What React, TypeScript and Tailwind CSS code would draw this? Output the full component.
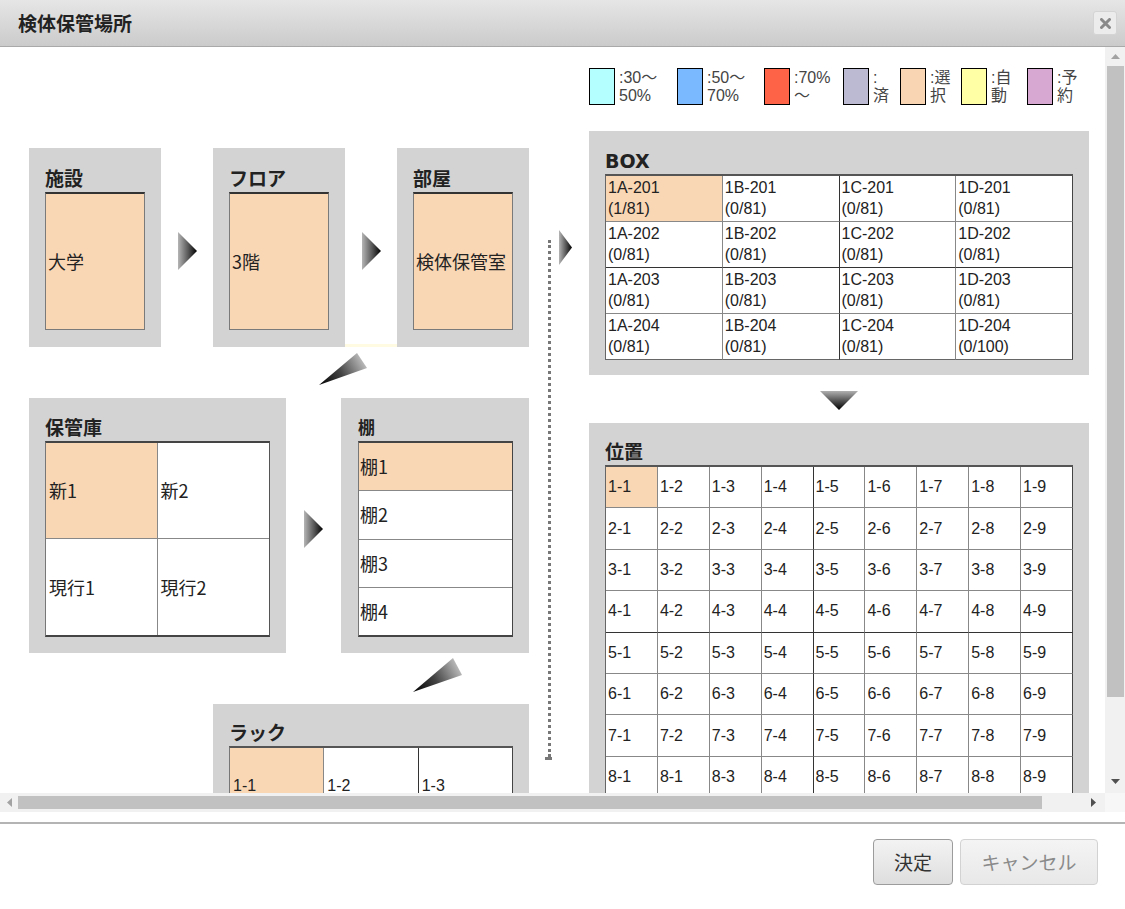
import React from "react";

const SANS = "font-['Liberation_Sans','Noto_Sans_CJK_JP',sans-serif]";
const HEAD = "font-['DejaVu_Sans','Noto_Sans_CJK_JP',sans-serif]";
const JP = "font-['Noto_Sans_CJK_JP',sans-serif]";
const SEL = "bg-[#f9d7b5]";

function RightTri({ id, w = 19, h = 38 }: { id: string; w?: number; h?: number }) {
  return (
    <svg width={w} height={h} viewBox={`0 0 ${w} ${h}`} className="block">
      <defs>
        <linearGradient id={id} x1="0" y1="0" x2="1" y2="0">
          <stop offset="0" stopColor="#b5b5b5" />
          <stop offset="0.55" stopColor="#555" />
          <stop offset="1" stopColor="#000" />
        </linearGradient>
      </defs>
      <polygon points={`0,0 ${w},${h / 2} 0,${h}`} fill={`url(#${id})`} />
    </svg>
  );
}

function DownTri() {
  return (
    <svg width={38} height={19} viewBox="0 0 38 19" className="block">
      <defs>
        <linearGradient id="dg" x1="0" y1="0" x2="0" y2="1">
          <stop offset="0" stopColor="#b0b0b0" />
          <stop offset="0.5" stopColor="#555" />
          <stop offset="1" stopColor="#000" />
        </linearGradient>
      </defs>
      <polygon points="0,0 38,0 19,19" fill="url(#dg)" />
    </svg>
  );
}

function Wedge({ id, pts, tip, base }: { id: string; pts: string; tip: [number, number]; base: [number, number] }) {
  return (
    <svg width={52} height={38} viewBox="0 0 52 38" className="block">
      <defs>
        <linearGradient id={id} gradientUnits="userSpaceOnUse" x1={tip[0]} y1={tip[1]} x2={base[0]} y2={base[1]}>
          <stop offset="0" stopColor="#000" />
          <stop offset="0.5" stopColor="#444" />
          <stop offset="1" stopColor="#b8b8b8" />
        </linearGradient>
      </defs>
      <polygon points={pts} fill={`url(#${id})`} />
    </svg>
  );
}

function Panel({
  title,
  className,
  titleCls,
  children,
}: {
  title: string;
  className: string;
  titleCls?: string;
  children: React.ReactNode;
}) {
  return (
    <div className={`bg-[#d3d3d3] shrink-0 ${className}`}>
      <div className={`h-[26px] leading-[26px] font-bold text-[#222] ${HEAD} ${titleCls ?? "text-[19px]"}`}>{title}</div>
      {children}
    </div>
  );
}

function BigBox({ text }: { text: string }) {
  return (
    <div className={`h-[138px] ${SEL} border border-[#7a7a7a] border-t-2 border-t-[#333] flex items-center pl-[2px] text-[18px] text-[#222] ${JP}`}>
      {text}
    </div>
  );
}

const legend = [
  { c: "bg-[#b4ffff]", t: [":30～", "50%"], w: "w-[88px]" },
  { c: "bg-[#7ab8ff]", t: [":50～", "70%"], w: "w-[87px]" },
  { c: "bg-[#ff6347]", t: [":70%", "～"], w: "w-[79px]" },
  { c: "bg-[#bcbad2]", t: [":", "済"], w: "w-[57px]" },
  { c: "bg-[#f9d5b3]", t: [":選", "択"], w: "w-[61px]" },
  { c: "bg-[#ffffa6]", t: [":自", "動"], w: "w-[66px]" },
  { c: "bg-[#d7a8d2]", t: [":予", "約"], w: "w-[60px]" },
];

const boxRows = [1, 2, 3, 4].map((r) =>
  ["A", "B", "C", "D"].map((c) => ({
    label: `1${c}-20${r}`,
    count: c === "A" && r === 1 ? "(1/81)" : c === "D" && r === 4 ? "(0/100)" : "(0/81)",
  }))
);

const posRows = [1, 2, 3, 4, 5, 6, 7, 8].map((r) =>
  [1, 2, 3, 4, 5, 6, 7, 8, 9].map((c) => (r === 8 && c === 2 ? "8-1" : `${r}-${c}`))
);

export default function App() {
  return (
    <div className={`w-[1125px] h-[909px] bg-white flex flex-col overflow-hidden ${SANS}`}>
      {/* Header */}
      <div className="h-[47px] shrink-0 bg-gradient-to-b from-[#e6e6e6] to-[#cbcbcb] border-b border-[#a9a9a9] flex items-center justify-between pl-[18px] pr-[8px]">
        <div className={`text-[19px] font-bold text-[#222] ${JP}`}>検体保管場所</div>
        <div className="w-[24px] h-[24px] rounded-[3px] bg-[#ececec] border border-[#d4d4d4] flex items-center justify-center">
          <svg width="11" height="11" viewBox="0 0 11 11">
            <path d="M1.5 1.5 L9.5 9.5 M9.5 1.5 L1.5 9.5" stroke="#8a8a8a" strokeWidth="3" strokeLinecap="round" />
          </svg>
        </div>
      </div>

      {/* Scroll area */}
      <div className="flex flex-col shrink-0">
        <div className="flex h-[746px]">
          <div className="w-[1105px] h-[746px] overflow-hidden">
            <div className="flex w-max pl-[29px] pt-[21px]">
              {/* Left column */}
              <div className="w-[500px] mt-[80px] flex flex-col shrink-0">
                <div className="flex h-[199px]">
                  <Panel title="施設" className="w-[132px] h-[199px] pt-[18px] px-[16px]">
                    <BigBox text="大学" />
                  </Panel>
                  <div className="w-[52px] flex justify-center pt-[84px]">
                    <RightTri id="r1" />
                  </div>
                  <Panel title="フロア" className="w-[132px] h-[199px] pt-[18px] px-[16px]">
                    <BigBox text="3階" />
                  </Panel>
                  <div className="w-[52px] flex flex-col">
                    <div className="flex justify-center pt-[84px]">
                      <RightTri id="r2" />
                    </div>
                    <div className="mt-auto h-[3px] bg-[#fffbe3]" />
                  </div>
                  <Panel title="部屋" className="w-[132px] h-[199px] pt-[18px] px-[16px]">
                    <BigBox text="検体保管室" />
                  </Panel>
                </div>

                <div className="h-[51px] pl-[289px] pt-[4px]">
                  <Wedge id="w1" pts="1,34 39,2 49,17" tip={[1, 34]} base={[44, 9]} />
                </div>

                <div className="flex h-[255px]">
                  <Panel title="保管庫" className="w-[257px] h-[255px] pt-[17px] px-[16px]">
                    <div className={`h-[196px] grid grid-cols-2 grid-rows-2 border-t-2 border-b-2 border-[#444] border-l border-l-[#777] border-r border-r-[#555] text-[18px] text-[#222] ${JP}`}>
                      <div className={`${SEL} border-r border-b border-[#888] flex items-center pl-[3px]`}>新1</div>
                      <div className="bg-white border-b border-[#888] flex items-center pl-[3px]">新2</div>
                      <div className="bg-white border-r border-[#888] flex items-center pl-[3px]">現行1</div>
                      <div className="bg-white flex items-center pl-[3px]">現行2</div>
                    </div>
                  </Panel>
                  <div className="w-[55px] flex justify-center pt-[112px]">
                    <RightTri id="r3" />
                  </div>
                  <Panel title="棚" titleCls="text-[17px]" className="w-[188px] h-[255px] pt-[17px] pl-[17px] pr-[16px]">
                    <div className={`h-[196px] flex flex-col border-t-2 border-b-2 border-[#444] border-l border-l-[#777] border-r border-r-[#444] text-[18px] text-[#222] ${JP}`}>
                      {["棚1", "棚2", "棚3", "棚4"].map((s, i) => (
                        <div
                          key={s}
                          className={`flex-1 flex items-center pl-[1px] ${i === 0 ? SEL : "bg-white"} ${i < 3 ? "border-b border-[#888]" : ""}`}
                        >
                          {s}
                        </div>
                      ))}
                    </div>
                  </Panel>
                </div>

                <div className="h-[51px] pl-[383px] pt-[4px]">
                  <Wedge id="w2" pts="1,35 41,1 50,18" tip={[1, 35]} base={[46, 10]} />
                </div>

                <div className="pl-[184px]">
                  <Panel title="ラック" className="w-[316px] h-[120px] pt-[16px] px-[16px]">
                    <div className="grid grid-cols-3 border-t-2 border-[#555] border-l border-l-[#777] text-[16px] text-[#222]">
                      {["1-1", "1-2", "1-3"].map((t, ci) => (
                        <div
                          key={t}
                          className={`h-[74px] flex items-center pt-[2px] pl-[3px] border-b border-b-[#888] border-r ${
                            ci === 1 ? "border-r-[#333]" : ci === 2 ? "border-r-[#444]" : "border-r-[#888]"
                          } ${ci === 0 ? SEL : "bg-white"}`}
                        >
                          {t}
                        </div>
                      ))}
                    </div>
                  </Panel>
                </div>
              </div>

              {/* Connector column */}
              <div className="w-[60px] shrink-0 pl-[16px] pt-[162px] flex items-start">
                <div className="flex flex-col pt-[10px]">
                  <div className="ml-[3px] w-[3px] h-[517px] border-l-[3px] border-dotted border-[#777]" />
                  <div className="w-[6px] h-[3px] border-t-[3px] border-dotted border-[#777]" />
                </div>
                <div className="ml-[8px]">
                  <RightTri id="r4" w={13} h={35} />
                </div>
              </div>

              {/* Right column */}
              <div className="w-[500px] shrink-0 flex flex-col mr-[16px]">
                <div className="flex h-[37px]">
                  {legend.map((l, i) => (
                    <div key={i} className={`flex shrink-0 ${l.w}`}>
                      <div className={`w-[26px] h-[37px] border border-black ${l.c}`} />
                      <div className="ml-[4px] mt-[1px] text-[16px] leading-[18px] text-[#444] whitespace-nowrap">
                        <div>{l.t[0]}</div>
                        <div>{l.t[1]}</div>
                      </div>
                    </div>
                  ))}
                </div>

                <Panel title="BOX" className="mt-[26px] w-[500px] h-[244px] pt-[17px] px-[16px]">
                  <div className="grid grid-cols-4 border-t-2 border-t-[#555] border-l border-l-[#666] text-[16px] leading-[21px] text-[#222]">
                    {boxRows.map((row, ri) =>
                      row.map((cell, ci) => (
                        <div
                          key={cell.label}
                          className={`h-[46px] pl-[2px] pt-[1px] border-r border-b ${
                            ci === 1 ? "border-r-[#333]" : ci === 3 ? "border-r-[#444]" : "border-r-[#888]"
                          } ${ri === 1 ? "border-b-[#333]" : ri === 3 ? "border-b-[#666]" : "border-b-[#888]"} ${
                            ri === 0 && ci === 0 ? SEL : "bg-white"
                          }`}
                        >
                          <div>{cell.label}</div>
                          <div>{cell.count}</div>
                        </div>
                      ))
                    )}
                  </div>
                </Panel>

                <div className="h-[48px] flex justify-center pt-[16px]">
                  <DownTri />
                </div>

                <Panel title="位置" className="w-[500px] pt-[16px] px-[16px] pb-[16px]">
                  <div className="grid grid-cols-9 border-t-2 border-t-[#555] border-l border-l-[#666] text-[16px] text-[#222]">
                    {posRows.map((row, ri) =>
                      row.map((t, ci) => (
                        <div
                          key={`${ri}-${ci}`}
                          className={`h-[41.4px] flex items-center pl-[2px] border-r border-b ${
                            ci === 3 ? "border-r-[#333]" : ci === 8 ? "border-r-[#444]" : "border-r-[#888]"
                          } ${ri === 3 ? "border-b-[#333]" : "border-b-[#888]"} ${ri === 0 && ci === 0 ? SEL : "bg-white"}`}
                        >
                          {t}
                        </div>
                      ))
                    )}
                  </div>
                </Panel>
              </div>
            </div>
          </div>

          {/* Vertical scrollbar */}
          <div className="w-[20px] h-[746px] bg-[#f1f1f1] flex flex-col items-center">
            <div className="h-[19px] flex items-center justify-center">
              <svg width="9" height="5" viewBox="0 0 9 5">
                <polygon points="0,5 9,5 4.5,0" fill="#a3a3a3" />
              </svg>
            </div>
            <div className="w-[17px] h-[631px] bg-[#c1c1c1]" />
            <div className="flex-1" />
            <div className="h-[24px] flex items-center justify-center">
              <svg width="9" height="5" viewBox="0 0 9 5">
                <polygon points="0,0 9,0 4.5,5" fill="#505050" />
              </svg>
            </div>
          </div>
        </div>

        {/* Horizontal scrollbar */}
        <div className="flex h-[19px]">
          <div className="w-[1105px] bg-[#f1f1f1] flex items-center">
            <div className="w-[18px] flex items-center justify-center">
              <svg width="5" height="9" viewBox="0 0 5 9">
                <polygon points="5,0 5,9 0,4.5" fill="#a3a3a3" />
              </svg>
            </div>
            <div className="w-[1024px] h-[13px] bg-[#c1c1c1]" />
            <div className="flex-1" />
            <div className="w-[24px] flex items-center justify-center">
              <svg width="5" height="9" viewBox="0 0 5 9">
                <polygon points="0,0 0,9 5,4.5" fill="#505050" />
              </svg>
            </div>
          </div>
          <div className="w-[20px] bg-[#f7f7f7]" />
        </div>
      </div>

      {/* Footer */}
      <div className="mt-[10px] border-t-2 border-[#b4b4b4] flex-1 flex justify-end items-start pt-[15px] pr-[27px] gap-[7px]">
        <button
          className={`w-[80px] h-[46px] rounded-[4px] border border-[#9c9c9c] bg-gradient-to-b from-[#f3f3f3] to-[#dedede] text-[19px] text-[#333] ${JP}`}
        >
          決定
        </button>
        <button
          className={`w-[138px] h-[46px] rounded-[4px] border border-[#d2d2d2] bg-gradient-to-b from-[#f4f4f4] to-[#e8e8e8] text-[19px] text-[#8a8a8a] ${JP}`}
        >
          キャンセル
        </button>
      </div>
    </div>
  );
}
